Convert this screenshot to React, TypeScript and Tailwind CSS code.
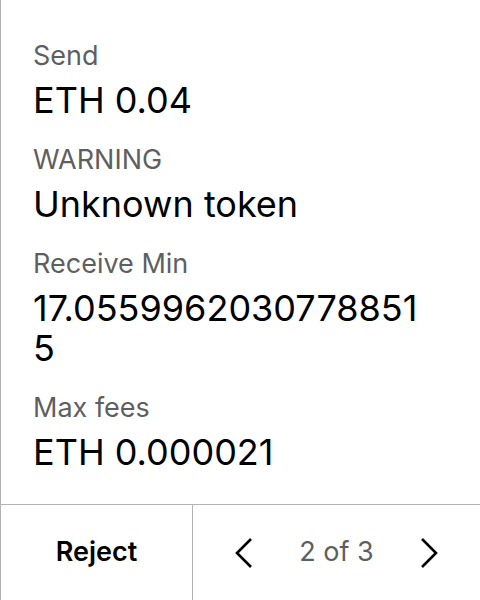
import React from "react";

const fields = [
  { label: "Send", value: "ETH 0.04" },
  { label: "WARNING", value: "Unknown token" },
  { label: "Receive Min", value: "17.05599620307788515" },
  { label: "Max fees", value: "ETH 0.000021" },
];

export default function App() {
  return (
    <div
      className="h-[600px] w-[480px] flex flex-col bg-white border-l border-[#b3b3b3] text-black"
      style={{ fontFamily: "Inter, 'Noto Sans', sans-serif" }}
    >
      {/* Fields */}
      <div className="flex-1 pt-10 pl-[32px] pr-[46px] flex flex-col gap-6">
        {fields.map((f) => (
          <div key={f.label} className="flex flex-col gap-2">
            <div className="text-[27px] leading-[32px] text-[#5f5f5f]">{f.label}</div>
            <div className="text-[36px] leading-[40px] break-all">{f.value}</div>
          </div>
        ))}
      </div>

      {/* Footer */}
      <div className="h-[96px] flex border-t border-[#b3b3b3]">
        <button className="w-[192px] flex items-center justify-center border-r border-[#b3b3b3] text-[27px] font-semibold">
          Reject
        </button>
        <div className="flex-1 flex items-center justify-between pl-[40px] pr-[40px]">
          <svg width="22" height="32" viewBox="0 0 22 32" fill="none">
            <path d="M18 2 L4 16 L18 30" stroke="black" strokeWidth="2.6" />
          </svg>
          <span className="text-[27px] text-[#5f5f5f]">2 of 3</span>
          <svg width="22" height="32" viewBox="0 0 22 32" fill="none">
            <path d="M4 2 L18 16 L4 30" stroke="black" strokeWidth="2.6" />
          </svg>
        </div>
      </div>
    </div>
  );
}
